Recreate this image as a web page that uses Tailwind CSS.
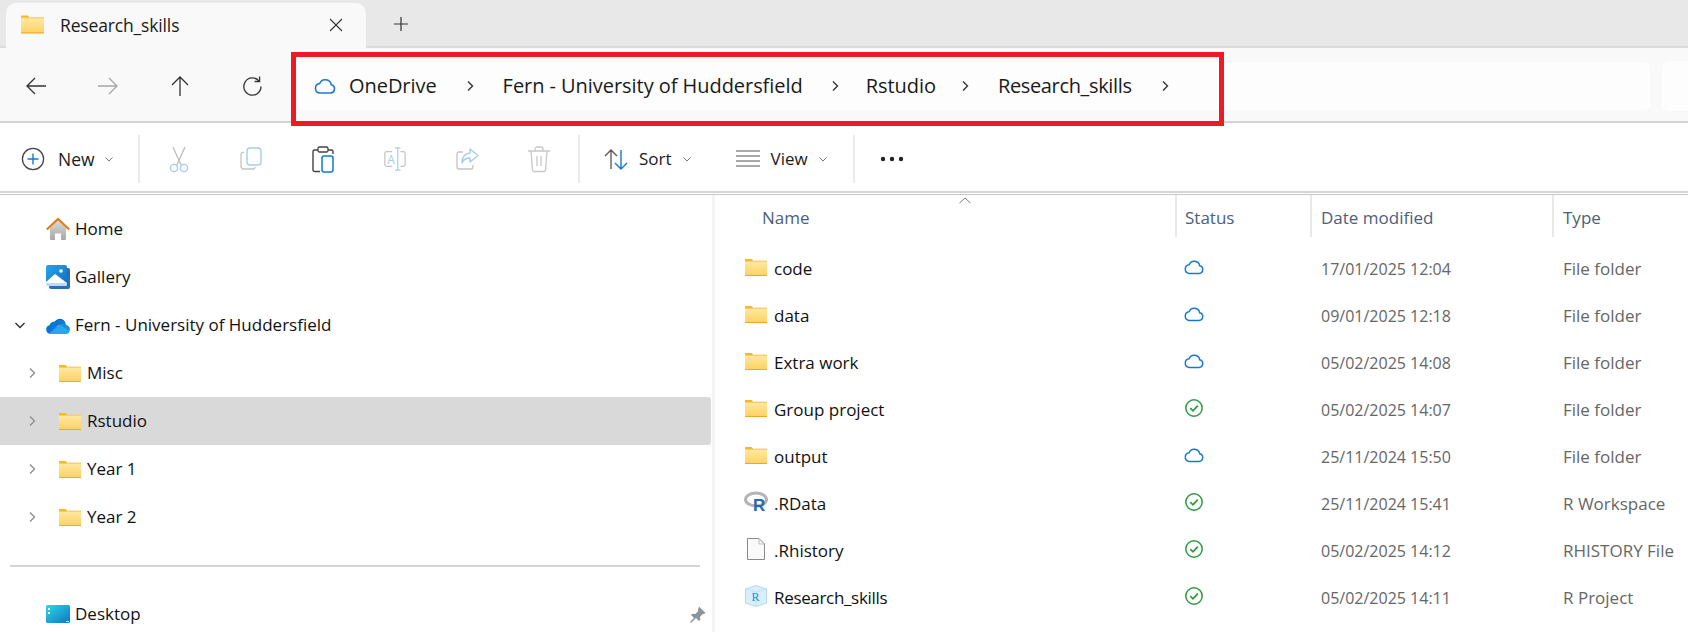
<!DOCTYPE html>
<html lang="en">
<head>
    <meta charset="UTF-8">
    <title>Research_skills - File Explorer</title>
    <script src="https://cdn.jsdelivr.net/npm/@tailwindcss/browser@4"></script>
</head>
<body class="w-[1688px] h-[632px] overflow-hidden bg-white text-[#1a1a1a] font-['Open_Sans',sans-serif] text-[17px]">

    <!-- shared icons -->
    <svg class="absolute w-0 h-0" width="0" height="0">
        <defs>
            <linearGradient id="folderFill" x1="0" y1="0" x2="0" y2="1"><stop offset="0" stop-color="#ffe9a6"/><stop offset="1" stop-color="#fcd260"/></linearGradient>
            <linearGradient id="homeFill" x1="0" y1="0" x2="0" y2="1"><stop offset="0" stop-color="#d8d8d8"/><stop offset="1" stop-color="#a8a8a8"/></linearGradient>
            <linearGradient id="deskFill" x1="0" y1="0" x2="1" y2="1"><stop offset="0" stop-color="#2fd6ea"/><stop offset="1" stop-color="#0a78c2"/></linearGradient>
            <linearGradient id="galleryFill" x1="0" y1="0" x2="1" y2="1"><stop offset="0" stop-color="#29a5e8"/><stop offset="1" stop-color="#0f6cc0"/></linearGradient>
        </defs>
        <symbol id="folder" viewBox="0 0 22 17">
            <path d="M0 0.5a.5.5 0 0 1 .5-.5h6l2.2 2H0z" fill="#f6b923"/>
            <path d="M0 2h8.7L10.6 1.7H22V17H0z" fill="url(#folderFill)"/>
            <path d="M8.7 2 10.6 1.7H22V2.6H0V2z" fill="#f3b632"/>
            <rect y="16" width="22" height="1" fill="#eba92c"/>
        </symbol>
        <symbol id="cloud" viewBox="0 0 24 24">
            <path d="M6.5 19h11a4.2 4.2 0 0 0 .7-8.3 6 6 0 0 0-11.5-1.2A4.8 4.8 0 0 0 6.5 19z" fill="none" stroke="#1b78cf" stroke-width="1.6" stroke-linejoin="round"/>
        </symbol>
        <symbol id="synced" viewBox="0 0 20 20">
            <circle cx="10" cy="10" r="8.2" fill="none" stroke="#2f9a41" stroke-width="1.5"/>
            <path d="M6.3 10.2 9 12.8l4.8-5.2" fill="none" stroke="#2f9a41" stroke-width="1.8"/>
        </symbol>
        <symbol id="chev" viewBox="0 0 12 12">
            <path d="M4 1.5 8.5 6 4 10.5" fill="none" stroke="currentColor" stroke-width="1.4"/>
        </symbol>
        <symbol id="down" viewBox="0 0 10 10">
            <path d="M1.5 3.5 5 7l3.5-3.5" fill="none" stroke="#777" stroke-width="1"/>
        </symbol>
    </svg>

    <!-- Tab strip -->
    <div class="h-[48px] bg-[#e8e8e8] border-b-2 border-[#dcdcdc] flex items-end pl-[6px]">
        <div class="w-[360px] h-[45px] -mb-[2px] bg-[#f9f9f9] rounded-t-[10px] flex items-center pl-[15px] pr-[23px]">
            <svg class="w-[23px] h-[19px] mb-[2px]"><use href="#folder"/></svg>
            <span class="ml-[16px] text-[17.5px] tracking-[-0.15px] flex-1 mb-[1px]">Research_skills</span>
            <svg class="w-[14px] h-[14px] mb-[1px]" viewBox="0 0 14 14"><path d="M1 1l12 12M13 1 1 13" stroke="#333" stroke-width="1.1"/></svg>
        </div>
        <div class="w-[70px] h-[45px] flex items-center justify-center">
            <svg class="w-[16px] h-[16px]" viewBox="0 0 16 16"><path d="M8 1v14M1 8h14" stroke="#333" stroke-width="1.2"/></svg>
        </div>
    </div>

    <!-- Nav bar -->
    <div class="relative h-[75px] bg-[#f9f9f9] border-b-2 border-[#d4d4d4] flex items-center pl-[24px] pt-[3px]">
        <div class="w-[274px] shrink-0 flex items-center gap-[48px]">
            <svg class="w-[24px] h-[24px]" viewBox="0 0 24 24"><path d="M22 12H3M11 4l-8 8 8 8" fill="none" stroke="#333" stroke-width="1.3"/></svg>
            <svg class="w-[24px] h-[24px]" viewBox="0 0 24 24"><path d="M2 12h19M13 4l8 8-8 8" fill="none" stroke="#a6a6a6" stroke-width="1.3"/></svg>
            <svg class="w-[24px] h-[24px]" viewBox="0 0 24 24"><path d="M12 22V3M4 11l8-8 8 8" fill="none" stroke="#333" stroke-width="1.3"/></svg>
            <svg class="w-[24px] h-[24px]" viewBox="0 0 24 24"><path d="M19 7a8.6 8.6 0 1 0 2 5.5" fill="none" stroke="#333" stroke-width="1.3"/><path d="M19.6 2.5V7.5H14.6" fill="none" stroke="#333" stroke-width="1.3"/></svg>
        </div>
        <!-- address box -->
        <div class="w-[1352px] shrink-0 h-[48px] bg-[#fdfdfd] rounded-[6px] flex items-center pl-[15px] text-[20px] tracking-[-0.05px]">
            <svg class="w-[24px] h-[24px] mr-[12px]"><use href="#cloud"/></svg>
            <span>OneDrive</span>
            <svg class="w-[12px] h-[12px] ml-[27px] mr-[27px] text-[#333]"><use href="#chev"/></svg>
            <span>Fern - University of Huddersfield</span>
            <svg class="w-[12px] h-[12px] ml-[26px] mr-[25px] text-[#333]"><use href="#chev"/></svg>
            <span>Rstudio</span>
            <svg class="w-[12px] h-[12px] ml-[23px] mr-[27px] text-[#333]"><use href="#chev"/></svg>
            <span class="tracking-[-0.35px]">Research_skills</span>
            <svg class="w-[12px] h-[12px] ml-[27px] text-[#333]"><use href="#chev"/></svg>
        </div>
        <!-- search box, cut off by the edge -->
        <div class="ml-[12px] w-[60px] h-[50px] shrink-0 bg-[#fdfdfd] rounded-[8px]"></div>
        <!-- red annotation round the breadcrumb -->
        <div class="absolute left-[291px] top-[4px] w-[933px] h-[74px] border-[5px] border-[#ed1c24]"></div>
    </div>

    <!-- Command bar -->
    <div class="h-[68px] flex items-center pt-[4px]">
        <div class="w-[138px] flex items-center pl-[21px]">
            <svg class="w-[24px] h-[24px]" viewBox="0 0 24 24"><circle cx="12" cy="12" r="10.6" fill="none" stroke="#444" stroke-width="1.3"/><path d="M12 6.5v11M6.5 12h11" stroke="#0f7ad8" stroke-width="1.4"/></svg>
            <span class="ml-[13px] text-[17.5px]">New</span>
            <svg class="w-[10px] h-[10px] ml-[9px]"><use href="#down"/></svg>
        </div>
        <div class="w-[2px] h-[48px] bg-[#ececec]"></div>
        <div class="w-[438px] flex items-center pl-[27px] gap-[48px]">
            <svg class="w-[24px] h-[28px]" viewBox="0 0 24 28"><path d="M6 2l8.5 19M18 2 9.5 21" stroke="#bdbdbd" stroke-width="1.3"/><circle cx="7" cy="23" r="3.6" fill="none" stroke="#a4cdef" stroke-width="1.4"/><circle cx="17" cy="23" r="3.6" fill="none" stroke="#a4cdef" stroke-width="1.4"/></svg>
            <svg class="w-[24px] h-[26px]" viewBox="0 0 24 26"><path d="M5 6.5H4a2 2 0 0 0-2 2V20a3 3 0 0 0 3 3h9a2 2 0 0 0 2-2" fill="none" stroke="#c4c4c4" stroke-width="1.3"/><rect x="8" y="2" width="14" height="17" rx="3" fill="none" stroke="#a4cdef" stroke-width="1.4"/></svg>
            <svg class="w-[24px] h-[28px]" viewBox="0 0 24 28"><path d="M7 5H3.5A1.5 1.5 0 0 0 2 6.500V25a1.500 1.500 0 0 0 1.500 1.500H9M17 5h3.500A1.500 1.500 0 0 1 22 6.500V9" fill="none" stroke="#444" stroke-width="1.4"/><rect x="7" y="2" width="10" height="5" rx="1.500" fill="none" stroke="#444" stroke-width="1.300"/><rect x="11" y="11" width="11" height="16" rx="2" fill="none" stroke="#0f7ad8" stroke-width="1.5"/></svg>
            <svg class="w-[24px] h-[28px]" viewBox="0 0 26 28"><path d="M10 6H4a2 2 0 0 0-2 2v12a2 2 0 0 0 2 2h6M19 6h3a2 2 0 0 1 2 2v12a2 2 0 0 1-2 2h-3" fill="none" stroke="#c4c4c4" stroke-width="1.3"/><path d="M13 2h6M16 2v24M13 26h6" stroke="#a4cdef" stroke-width="1.3"/><text x="4.500" y="19" font-size="13" font-family="Open Sans, sans-serif" fill="#a4cdef">A</text></svg>
            <svg class="w-[24px] h-[26px]" viewBox="0 0 24 26"><path d="M8 6H4a2 2 0 0 0-2 2v13a2 2 0 0 0 2 2h12a2 2 0 0 0 2-2v-2" fill="none" stroke="#c4c4c4" stroke-width="1.3"/><path d="M15 3l8 6.500-8 6.500v-4c-4 0-6.500 1.500-8 5 0-6 3-9.500 8-10z" fill="none" stroke="#a4cdef" stroke-width="1.4" stroke-linejoin="round"/></svg>
            <svg class="w-[24px] h-[28px]" viewBox="0 0 24 28"><path d="M1 6h22M8 6V4a2 2 0 0 1 2-2h4a2 2 0 0 1 2 2v2M4 6l1.500 19a1.500 1.500 0 0 0 1.500 1.500h10a1.500 1.500 0 0 0 1.500-1.500L20 6M10 11v10M14 11v10" fill="none" stroke="#c8c8c8" stroke-width="1.300"/></svg>
        </div>
        <div class="w-[2px] h-[48px] bg-[#ececec]"></div>
        <div class="w-[273px] flex items-center pl-[24px]">
            <svg class="w-[24px] h-[24px]" viewBox="0 0 24 24"><path d="M7 22V3M1 9l6-6 6 6" fill="none" stroke="#555" stroke-width="1.3"/><path d="M17 3v19M11 16l6 6 6-6" fill="none" stroke="#0f7ad8" stroke-width="1.4"/></svg>
            <span class="ml-[11px] text-[17px]">Sort</span>
            <svg class="w-[10px] h-[10px] ml-[10px]"><use href="#down"/></svg>
            <svg class="w-[24px] h-[18px] ml-[44px]" viewBox="0 0 24 18"><path d="M0 1h24M0 6h24M0 11h24M0 16h24" stroke="#555" stroke-width="1.200"/></svg>
            <span class="ml-[11px] text-[17px]">View</span>
            <svg class="w-[10px] h-[10px] ml-[10px]"><use href="#down"/></svg>
        </div>
        <div class="w-[2px] h-[48px] bg-[#ececec]"></div>
        <svg class="w-[24px] h-[6px] ml-[25px]" viewBox="0 0 24 6"><circle cx="3" cy="3" r="2.200" fill="#222"/><circle cx="12" cy="3" r="2.200" fill="#222"/><circle cx="21" cy="3" r="2.200" fill="#222"/></svg>
    </div>

    <div class="h-[2px] bg-[#d4d4d4]"></div>
    <div class="h-[1px] bg-white"></div>
    <div class="h-[1px] bg-[#c6c6c6]"></div>

    <!-- Main area -->
    <div class="flex h-[437px]">
        <!-- Sidebar -->
        <aside class="w-[712px] shrink-0 pt-[10px] pr-[1px] text-[17px] text-[#111]">
            <div class="h-[48px] flex items-center pl-[46px]">
                <svg class="w-[24px] h-[24px]" viewBox="0 0 24 24"><path d="M4 11 12 3.500 20 11v11a1 1 0 0 1-1 1h-4v-6.500H9V23H5a1 1 0 0 1-1-1z" fill="url(#homeFill)"/><path d="M.8 12.500 12 2l11.200 10.500" fill="none" stroke="#e07b16" stroke-width="2.200"/></svg>
                <span class="ml-[5px]">Home</span>
            </div>
            <div class="h-[48px] flex items-center pl-[46px]">
                <svg class="w-[24px] h-[24px]" viewBox="0 0 24 24"><rect x="3" y="3" width="21" height="21" rx="2" fill="#2c6cb8"/><rect y="0" width="21" height="21" rx="2" fill="url(#galleryFill)"/><path d="M0 17l9-8 12 9v1a2 2 0 0 1-2 2H2a2 2 0 0 1-2-2z" fill="#fff"/><path d="M0 18h21v1a2 2 0 0 1-2 2H2a2 2 0 0 1-2-2z" fill="#bcdcf5"/><circle cx="15" cy="6" r="1.800" fill="#fff"/></svg>
                <span class="ml-[5px]">Gallery</span>
            </div>
            <div class="h-[48px] flex items-center pl-[14px]">
                <svg class="w-[12px] h-[12px] text-[#333] rotate-90"><use href="#chev"/></svg>
                <svg class="w-[24px] h-[18px] ml-[20px]" viewBox="0 0 24 18"><path d="M8 8a6 6 0 0 1 10.800-2.600L14 8l-6 4z" fill="#0364b8"/><path d="M9.300 6.500A6 6 0 0 1 18.800 5.400 5 5 0 0 1 19.500 8L14 10z" fill="#0f78d4"/><path d="M4.500 18A4.500 4.500 0 0 1 3.400 9.200 6 6 0 0 1 9 5.500c2 0 3.500.800 4.500 2L3.800 18z" fill="#0078d4"/><path d="M4.500 18h15a4.500 4.500 0 0 0 1.500-8.700 5 5 0 0 0-7-.800L9 12z" fill="#1490df"/><path d="M4.500 18h15a4.500 4.500 0 0 0 4-3l-9-6-11 8z" fill="#28a8ea"/></svg>
                <span class="ml-[5px]">Fern - University of Huddersfield</span>
            </div>
            <div class="h-[48px] flex items-center pl-[26px]">
                <svg class="w-[12px] h-[12px] text-[#8f8f8f]"><use href="#chev"/></svg>
                <svg class="w-[22px] h-[17px] ml-[21px]"><use href="#folder"/></svg>
                <span class="ml-[6px]">Misc</span>
            </div>
            <div class="h-[48px] flex items-center pl-[26px] bg-[#d9d9d9] rounded-r-[3px]">
                <svg class="w-[12px] h-[12px] text-[#8f8f8f]"><use href="#chev"/></svg>
                <svg class="w-[22px] h-[17px] ml-[21px]"><use href="#folder"/></svg>
                <span class="ml-[6px]">Rstudio</span>
            </div>
            <div class="h-[48px] flex items-center pl-[26px]">
                <svg class="w-[12px] h-[12px] text-[#8f8f8f]"><use href="#chev"/></svg>
                <svg class="w-[22px] h-[17px] ml-[21px]"><use href="#folder"/></svg>
                <span class="ml-[6px]">Year 1</span>
            </div>
            <div class="h-[48px] flex items-center pl-[26px]">
                <svg class="w-[12px] h-[12px] text-[#8f8f8f]"><use href="#chev"/></svg>
                <svg class="w-[22px] h-[17px] ml-[21px]"><use href="#folder"/></svg>
                <span class="ml-[6px]">Year 2</span>
            </div>
            <div class="ml-[10px] w-[690px] h-[2px] bg-[#d4d4d4] mt-[24px] mb-[28px]"></div>
            <div class="h-[38px] flex items-center pl-[46px] pr-[5px]">
                <svg class="w-[24px] h-[18px]" viewBox="0 0 24 18"><rect width="24" height="18" rx="1.500" fill="url(#deskFill)"/><rect x="2" y="3" width="2" height="2" fill="#fff"/><rect x="2" y="7" width="2" height="2" fill="#fff"/><rect x="20" y="16" width="3" height="1" fill="#cfe9f7"/></svg>
                <span class="ml-[5px] flex-1">Desktop</span>
                <svg class="w-[17px] h-[17px]" viewBox="0 0 17 17"><path d="M10 .5 16.500 7l-1.500 1-1-.3-3 3 .3 3-1.300 1.300-3-3-4.500 4.500L.5 16.500 5 12 2 9l1.300-1.300 3 .3 3-3L9 4z" fill="#8a949c"/></svg>
            </div>
        </aside>

        <div class="w-[3px] bg-[#f4f4f4]"></div>

        <!-- File list -->
        <section class="flex-1 relative">
            <svg class="absolute left-[244px] top-[2px] w-[12px] h-[7px]" viewBox="0 0 12 7"><path d="M.5 6 6 1l5.500 5" fill="none" stroke="#777" stroke-width="1"/></svg>
            <div class="h-[42px] flex items-center text-[#4c607a] text-[17px]">
                <div class="w-[460px] pl-[47px] pt-[3px]">Name</div>
                <div class="w-[135px] h-full flex items-center border-l-2 border-[#e8e8e8] pl-[8px] pt-[3px]">Status</div>
                <div class="w-[242px] h-full flex items-center border-l-2 border-[#e8e8e8] pl-[9px] pt-[3px]">Date modified</div>
                <div class="h-full flex items-center border-l-2 border-[#e8e8e8] pl-[9px] pt-[3px]">Type</div>
            </div>
            <div class="mt-[8px] text-[17px]">
                <div class="h-[47px] flex items-center">
                    <div class="w-[460px] pl-[30px] flex items-center text-[#111]"><svg class="w-[22px] h-[17px] mb-[3px]"><use href="#folder"/></svg><span class="ml-[7px]">code</span></div>
                    <div class="w-[135px] pl-[8px]"><svg class="w-[22px] h-[22px] mb-[3px]"><use href="#cloud"/></svg></div>
                    <div class="w-[242px] pl-[11px] text-[#666] text-[16px]">17/01/2025 12:04</div>
                    <div class="pl-[11px] text-[#666] whitespace-nowrap">File folder</div>
                </div>
                <div class="h-[47px] flex items-center">
                    <div class="w-[460px] pl-[30px] flex items-center text-[#111]"><svg class="w-[22px] h-[17px] mb-[3px]"><use href="#folder"/></svg><span class="ml-[7px]">data</span></div>
                    <div class="w-[135px] pl-[8px]"><svg class="w-[22px] h-[22px] mb-[3px]"><use href="#cloud"/></svg></div>
                    <div class="w-[242px] pl-[11px] text-[#666] text-[16px]">09/01/2025 12:18</div>
                    <div class="pl-[11px] text-[#666] whitespace-nowrap">File folder</div>
                </div>
                <div class="h-[47px] flex items-center">
                    <div class="w-[460px] pl-[30px] flex items-center text-[#111]"><svg class="w-[22px] h-[17px] mb-[3px]"><use href="#folder"/></svg><span class="ml-[7px]">Extra work</span></div>
                    <div class="w-[135px] pl-[8px]"><svg class="w-[22px] h-[22px] mb-[3px]"><use href="#cloud"/></svg></div>
                    <div class="w-[242px] pl-[11px] text-[#666] text-[16px]">05/02/2025 14:08</div>
                    <div class="pl-[11px] text-[#666] whitespace-nowrap">File folder</div>
                </div>
                <div class="h-[47px] flex items-center">
                    <div class="w-[460px] pl-[30px] flex items-center text-[#111]"><svg class="w-[22px] h-[17px] mb-[3px]"><use href="#folder"/></svg><span class="ml-[7px]">Group project</span></div>
                    <div class="w-[135px] pl-[9px]"><svg class="w-[20px] h-[20px] mb-[3px]"><use href="#synced"/></svg></div>
                    <div class="w-[242px] pl-[11px] text-[#666] text-[16px]">05/02/2025 14:07</div>
                    <div class="pl-[11px] text-[#666] whitespace-nowrap">File folder</div>
                </div>
                <div class="h-[47px] flex items-center">
                    <div class="w-[460px] pl-[30px] flex items-center text-[#111]"><svg class="w-[22px] h-[17px] mb-[3px]"><use href="#folder"/></svg><span class="ml-[7px]">output</span></div>
                    <div class="w-[135px] pl-[8px]"><svg class="w-[22px] h-[22px] mb-[3px]"><use href="#cloud"/></svg></div>
                    <div class="w-[242px] pl-[11px] text-[#666] text-[16px]">25/11/2024 15:50</div>
                    <div class="pl-[11px] text-[#666] whitespace-nowrap">File folder</div>
                </div>
                <div class="h-[47px] flex items-center">
                    <div class="w-[460px] pl-[29px] flex items-center text-[#111]">
                        <svg class="w-[24px] h-[22px] mb-[3px]" viewBox="0 0 24 22"><ellipse cx="12" cy="8.500" rx="10.500" ry="6.500" fill="none" stroke="#b4b4b8" stroke-width="3"/><text x="9" y="20" font-size="17" font-weight="700" font-family="Liberation Sans, sans-serif" fill="#2468b4">R</text></svg>
                        <span class="ml-[6px]">.RData</span>
                    </div>
                    <div class="w-[135px] pl-[9px]"><svg class="w-[20px] h-[20px] mb-[3px]"><use href="#synced"/></svg></div>
                    <div class="w-[242px] pl-[11px] text-[#666] text-[16px]">25/11/2024 15:41</div>
                    <div class="pl-[11px] text-[#666] whitespace-nowrap">R Workspace</div>
                </div>
                <div class="h-[47px] flex items-center">
                    <div class="w-[460px] pl-[32px] flex items-center text-[#111]">
                        <svg class="w-[18px] h-[22px] mb-[3px]" viewBox="0 0 18 22"><path d="M.5.5H12L17.500 6V21.500H.5z" fill="#fafafa" stroke="#8a8a8a"/><path d="M12 .5V6h5.500" fill="none" stroke="#bdbdbd"/></svg>
                        <span class="ml-[9px]">.Rhistory</span>
                    </div>
                    <div class="w-[135px] pl-[9px]"><svg class="w-[20px] h-[20px] mb-[3px]"><use href="#synced"/></svg></div>
                    <div class="w-[242px] pl-[11px] text-[#666] text-[16px]">05/02/2025 14:12</div>
                    <div class="pl-[11px] text-[#666] whitespace-nowrap">RHISTORY File</div>
                </div>
                <div class="h-[47px] flex items-center">
                    <div class="w-[460px] pl-[30px] flex items-center text-[#111]">
                        <svg class="w-[22px] h-[22px] mb-[3px]" viewBox="0 0 22 22"><path d="M11 .5 21.500 4V18L11 21.500.5 18V4z" fill="#d8eef9" stroke="#b5dcf0"/><path d="M.5 4 11 7l10.500-3M11 7v14" fill="none" stroke="#c3e3f3"/><text x="6.500" y="15.500" font-size="12" font-family="Liberation Serif, serif" fill="#1b8fe0">R</text></svg>
                        <span class="ml-[7px] tracking-[-0.33px]">Research_skills</span>
                    </div>
                    <div class="w-[135px] pl-[9px]"><svg class="w-[20px] h-[20px] mb-[3px]"><use href="#synced"/></svg></div>
                    <div class="w-[242px] pl-[11px] text-[#666] text-[16px]">05/02/2025 14:11</div>
                    <div class="pl-[11px] text-[#666] whitespace-nowrap">R Project</div>
                </div>
            </div>
        </section>
    </div>
</body>
</html>
